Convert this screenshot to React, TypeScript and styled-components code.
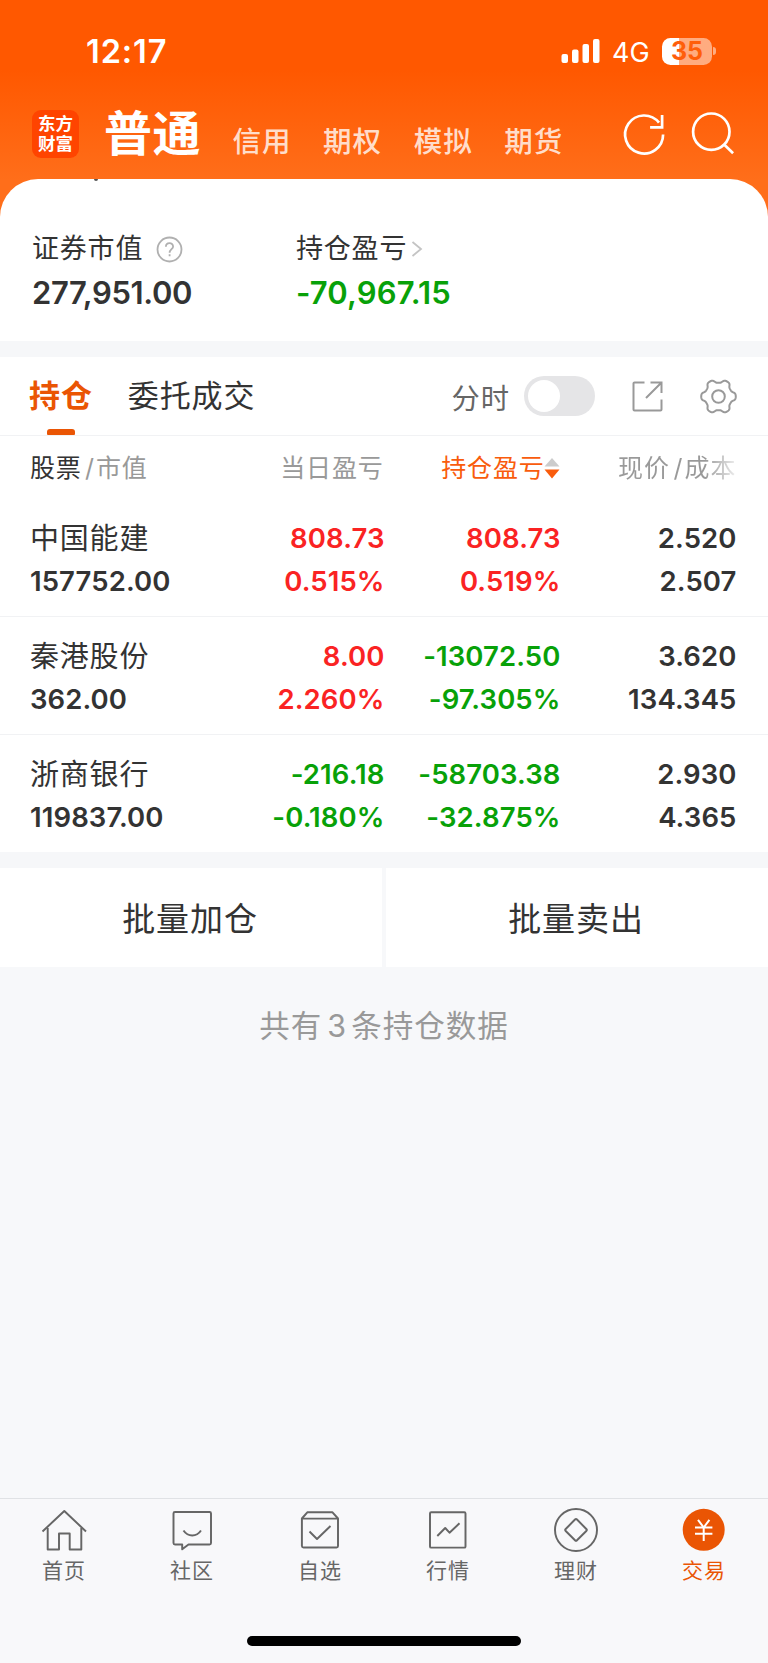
import React from "react";
import styled, { createGlobalStyle } from "styled-components";

const GlobalStyle = createGlobalStyle`
  * { box-sizing: border-box; }
  body {
    margin: 0;
    background: #f7f8fa;
    color: #333;
    font-family: Inter, "Noto Sans CJK SC", sans-serif;
    -webkit-font-smoothing: antialiased;
  }
`;

const Screen = styled.div`
  width: 768px;
  height: 1663px;
  display: flex;
  flex-direction: column;
  overflow: hidden;
  white-space: nowrap;
`;

const Hero = styled.header`
  background: linear-gradient(#ff5800 0, #ff5800 70px, #ff6e1a 180px);
`;

const StatusBar = styled.div`
  height: 102px;
  padding: 0 52px 0 86px;
  display: flex;
  justify-content: space-between;
  align-items: center;
  color: #fff;
`;

const Clock = styled.span`
  margin-top: 1px;
  font-size: 32.5px;
  line-height: 40px;
  font-weight: 600;
  letter-spacing: 0.9px;
`;

const StatusRight = styled.div`
  display: flex;
  align-items: center;
`;

const Network = styled.span`
  margin: 3px 13px 0 11px;
  width: 37px;
  font-size: 27px;
  line-height: 32px;
`;

const Battery = styled.div`
  width: 50px;
  height: 27px;
  border-radius: 8.5px;
  background: linear-gradient(90deg, #fff 17px, rgba(255, 255, 255, 0.5) 17px);
  color: #ff5e0a;
  font-size: 25px;
  font-weight: 700;
  line-height: 27px;
  text-align: center;
`;

const BatteryTip = styled.div`
  width: 3px;
  height: 8px;
  margin-left: 1px;
  border-radius: 0 4px 4px 0;
  background: rgba(255, 255, 255, 0.5);
`;

const TopNav = styled.div`
  height: 77px;
  padding-left: 32px;
  display: flex;
  align-items: flex-start;
  color: #fff;
`;

const Logo = styled.div`
  width: 47px;
  height: 48px;
  margin-top: 8px;
  padding-top: 4px;
  border-radius: 9px;
  background: #ff4400;
  font-size: 17.5px;
  line-height: 20px;
  font-weight: 700;
  text-align: center;
`;

const Account = styled.div`
  margin: 2px 0 0 25px;
  width: 106px;
  font-size: 48px;
  line-height: 60px;
  font-weight: 700;
  letter-spacing: 0.5px;
`;

const AccountLinks = styled.div`
  flex: 1;
  display: flex;
  margin-top: 20px;
`;

const AccountLink = styled.span`
  width: 90.6px;
  padding-left: 22.5px;
  font-size: 28.5px;
  line-height: 40px;
  font-weight: 500;
  letter-spacing: 1px;
  color: rgba(255, 255, 255, 0.8);
`;

const TopIcons = styled.svg`
  width: 120px;
  height: 48px;
  margin: 8px 28px 0 0;
`;

const Summary = styled.section`
  height: 162px;
  padding: 0 32px;
  display: flex;
  flex-wrap: wrap;
  align-content: flex-start;
  background: #fff;
  border-radius: 38px 38px 0 0;
`;

const Remnant = styled.div`
  width: 100%;
  height: 2px;
  &::before {
    content: "";
    display: block;
    width: 4px;
    height: 2px;
    margin-left: 62px;
    border-radius: 0 0 2px 2px;
    background: #555;
  }
`;

const Metric = styled.div`
  width: 264px;
  padding-top: 47px;
`;

const MetricLabel = styled.div`
  display: flex;
  align-items: center;
  height: 42px;
  font-size: 27px;
  line-height: 42px;
  letter-spacing: 0.8px;
`;

const MetricValue = styled.div<{ $loss?: boolean }>`
  color: ${(p) => (p.$loss ? "#08a108" : "#333")};
  letter-spacing: ${(p) => (p.$loss ? "0.15px" : "-0.35px")};
  font-size: 31px;
  line-height: 46px;
  font-weight: 600;
`;

const Gap = styled.div<{ $h: number }>`
  height: ${(p) => p.$h}px;
  background: #f6f7f9;
`;

const Tabs = styled.nav`
  height: 79px;
  padding: 0 31px 0 29px;
  display: flex;
  align-items: center;
  background: #fff;
  border-bottom: 1px solid #f1f2f4;
`;

const Tab = styled.div<{ $active?: boolean }>`
  height: 78px;
  margin-right: 35px;
  display: flex;
  flex-direction: column;
  align-items: center;
  font-size: 31px;
  line-height: 78px;
  letter-spacing: 0.9px;
  font-weight: ${(p) => (p.$active ? 700 : 400)};
  color: ${(p) => (p.$active ? "#ea5504" : "#333")};
  &::after {
    content: "";
    display: ${(p) => (p.$active ? "block" : "none")};
    width: 28px;
    height: 6px;
    flex: none;
    margin: -6px 0 0 0;
    border-radius: 3px 3px 1px 1px;
    background: #ea5504;
  }
`;

const ToggleLabel = styled.span`
  margin-left: auto;
  font-size: 28.3px;
  letter-spacing: 1px;
  color: #666;
`;

const Toggle = styled.span`
  width: 71px;
  height: 40px;
  margin: 0 37.5px 0 13.5px;
  padding: 4px;
  border-radius: 20px;
  background: #e5e5e7;
  &::before {
    content: "";
    display: block;
    width: 32px;
    height: 32px;
    border-radius: 50%;
    background: #fff;
  }
`;

const TableHead = styled.div`
  height: 63px;
  padding-left: 30px;
  display: grid;
  grid-template-columns: 218px 135.5px 177px 176px;
  align-items: center;
  background: #fff;
  color: #999;
  font-size: 25px;
  line-height: 36px;
  letter-spacing: 0.8px;
`;

const HeadCell = styled.div<{ $right?: boolean; $color?: string }>`
  display: flex;
  align-items: center;
  justify-content: ${(p) => (p.$right ? "flex-end" : "flex-start")};
  color: ${(p) => p.$color ?? "inherit"};
`;

const Slash = styled.span`
  margin: 0 1px 0 3.5px;
`;

const Dark = styled.span`
  color: #333;
`;

const FadingCell = styled(HeadCell)`
  color: transparent;
  background: linear-gradient(90deg, #999 144px, rgba(153, 153, 153, 0.15) 176px);
  background-clip: text;
  -webkit-background-clip: text;
  letter-spacing: 1px;
`;

const Row = styled.div`
  height: 118px;
  padding: 17.5px 0 0 30px;
  display: grid;
  grid-template-columns: 218px 136.5px 176px 176px;
  background: #fff;
  border-bottom: 1px solid #f1f2f4;
  &:last-child {
    height: 117px;
    border-bottom: 0;
  }
`;

const Cell = styled.div<{ $tone?: "up" | "down" }>`
  text-align: right;
  font-size: 27.5px;
  line-height: 43px;
  font-weight: 600;
  letter-spacing: 0.1px;
  color: ${(p) => (p.$tone === "up" ? "#fa2323" : p.$tone === "down" ? "#08a108" : "#333")};
`;

const StockCell = styled(Cell)`
  text-align: left;
`;

const StockName = styled.div`
  font-size: 29px;
  font-weight: 400;
  letter-spacing: 0.8px;
`;

const Actions = styled.div`
  display: flex;
  gap: 4px;
`;

const Action = styled.button`
  flex: 1;
  height: 99px;
  padding: 3px 2px 0 0;
  border: 0;
  background: #fff;
  color: #333;
  font: 400 33px/96px Inter, "Noto Sans CJK SC", sans-serif;
  letter-spacing: 0.9px;
`;

const Note = styled.div`
  height: 118px;
  text-align: center;
  font-size: 30.5px;
  line-height: 117px;
  letter-spacing: 1px;
  color: #999;
`;

const Count = styled.span`
  margin: 0 4px 0 5px;
`;

const BottomNav = styled.nav`
  height: 165px;
  margin-top: auto;
  display: grid;
  grid-template-columns: repeat(6, 1fr);
  grid-template-rows: 137px 10px;
  border-top: 1px solid #e0e2e5;
  background: #f8f8fa;
`;

const NavItem = styled.div<{ $active?: boolean }>`
  padding-top: 7px;
  display: flex;
  flex-direction: column;
  align-items: center;
  font-size: 21px;
  line-height: 34px;
  letter-spacing: 0.9px;
  color: ${(p) => (p.$active ? "#ea5504" : "#666")};
`;

const NavIcon = styled.svg`
  width: 48px;
  height: 48px;
  flex: none;
  fill: none;
  stroke: #666;
  stroke-width: 1.95;
  stroke-linejoin: round;
`;

const HomeIndicator = styled.div`
  grid-column: 1 / -1;
  justify-self: center;
  width: 274px;
  height: 10px;
  border-radius: 5px;
  background: #000;
`;

const HelpIcon = styled.svg`
  margin-left: 12.5px;
`;

const Chevron = styled.svg`
  margin-left: 4px;
`;

const ShareIcon = styled.svg`
  margin-right: 37px;
`;

const SortIcon = styled.svg`
  margin-left: -0.5px;
`;

// Six-lobed gear outline with flattened lobes.
const gearPoints = Array.from({ length: 180 }, (_, i) => {
  const a = (i / 180) * Math.PI * 2;
  const r = 15.5 + 1.9 * Math.tanh(1.7 * Math.cos(6 * a));
  return `${(18.5 + r * Math.cos(a)).toFixed(2)},${(18.5 + r * Math.sin(a)).toFixed(2)}`;
}).join(" ");

type Pair = [string, string];
type Holding = { name: string; value: string; day: Pair; total: Pair; price: Pair };

const holdings: Holding[] = [
  { name: "中国能建", value: "157752.00", day: ["808.73", "0.515%"], total: ["808.73", "0.519%"], price: ["2.520", "2.507"] },
  { name: "秦港股份", value: "362.00", day: ["8.00", "2.260%"], total: ["-13072.50", "-97.305%"], price: ["3.620", "134.345"] },
  { name: "浙商银行", value: "119837.00", day: ["-216.18", "-0.180%"], total: ["-58703.38", "-32.875%"], price: ["2.930", "4.365"] },
];

const navItems = [
  {
    label: "首页",
    icon: <><path d="M2.5 25.5 24.3 5 46 25.5" /><path d="M7.7 22v21.5H19V27.5h10.7v16h11.6V22" /></>,
  },
  {
    label: "社区",
    icon: <><path d="M7 6h34.5a1.5 1.5 0 0 1 1.5 1.5V37a1.5 1.5 0 0 1-1.5 1.5h-21l-6.3 4.8v-4.8H7A1.5 1.5 0 0 1 5.5 37V7.5A1.5 1.5 0 0 1 7 6Z" /><path d="M15.5 24.5c4.5 6.7 13 6.7 17.5 0" /></>,
  },
  {
    label: "自选",
    icon: <><path d="M5.9 12.5 11.3 6.3h25.2l5.5 6.2V40a1.5 1.5 0 0 1-1.5 1.5h-33A1.6 1.6 0 0 1 5.9 40ZM5.9 12.6H42" /><path d="M13.5 25.5 21 33l13.5-13" /></>,
  },
  {
    label: "行情",
    icon: <><rect x="6" y="6.3" width="35.5" height="35.3" rx="1.2" /><path d="m13.3 30 7.9-8 4.3 4.7 10-9.4" /></>,
  },
  {
    label: "理财",
    icon: <><circle cx="24" cy="24" r="21" /><path d="M23 13.5q1-1 2 0L34.3 23q1 1 0 2L25 34.3q-1 1-2 0L13.7 25q-1-1 0-2Z" /></>,
  },
  {
    label: "交易",
    active: true,
    icon: <><circle cx="23.7" cy="23.8" r="21" fill="#ea5504" stroke="none" /><path stroke="#fff" strokeWidth="2" d="m18 13.8 5.7 7.7 5.7-7.7M15 21.5h17.4M15 27.7h17.4M23.7 21.5v13.5" /></>,
  },
];

const Figures = ({ pair, colored }: { pair: Pair; colored?: boolean }) => (
  <Cell $tone={colored ? (pair[0].startsWith("-") ? "down" : "up") : undefined}>
    <div>{pair[0]}</div>
    <div>{pair[1]}</div>
  </Cell>
);

export default function App() {
  return (
    <Screen>
      <GlobalStyle />
      <Hero>
        <StatusBar>
          <Clock>12:17</Clock>
          <StatusRight>
            <svg width="40" height="26" fill="#fff">
              <rect x="0.5" y="16" width="6.5" height="9" rx="2" />
              <rect x="11" y="11.5" width="6.5" height="13.5" rx="2" />
              <rect x="21.5" y="6" width="6.5" height="19" rx="2" />
              <rect x="32" y="1" width="6.5" height="24" rx="2" />
            </svg>
            <Network>4G</Network>
            <Battery>35</Battery>
            <BatteryTip />
          </StatusRight>
        </StatusBar>
        <TopNav>
          <Logo>东方<br />财富</Logo>
          <Account>普通</Account>
          <AccountLinks>
            {["信用", "期权", "模拟", "期货"].map((t) => <AccountLink key={t}>{t}</AccountLink>)}
          </AccountLinks>
          <TopIcons viewBox="0 0 120 48" fill="none" stroke="#fff" strokeWidth="2.7">
            <path d="M43.1 24.5a19 19 0 1 1-4.1-11.8" />
            <path d="M42.1 5v12.300H30.1" />
            <circle cx="91.3" cy="21.7" r="18.2" />
            <path d="m104.1 34.5 9 8.7" />
          </TopIcons>
        </TopNav>
        <Summary>
          <Remnant />
          <Metric>
            <MetricLabel>
              证券市值
              <HelpIcon width="27" height="27" viewBox="0 0 27 27" fill="none" stroke="#b0b0b0" strokeWidth="1.8">
                <circle cx="13.5" cy="13.5" r="12" />
                <path d="M9.9 10.8c0-4.8 7.2-4.8 7.2-.3 0 2.6-3.5 2.9-3.5 6.3M13.6 18.3v2" />
              </HelpIcon>
            </MetricLabel>
            <MetricValue>277,951.00</MetricValue>
          </Metric>
          <Metric>
            <MetricLabel>
              持仓盈亏
              <Chevron width="12" height="18" fill="none" stroke="#c4c4c4" strokeWidth="1.8">
                <path d="m1.5 2 8.5 7-8.5 7" />
              </Chevron>
            </MetricLabel>
            <MetricValue $loss>-70,967.15</MetricValue>
          </Metric>
        </Summary>
      </Hero>
      <Gap $h={16} />
      <Tabs>
        <Tab $active>持仓</Tab>
        <Tab>委托成交</Tab>
        <ToggleLabel>分时</ToggleLabel>
        <Toggle />
        <ShareIcon width="31" height="31" fill="none" stroke="#999" strokeWidth="2">
          <path d="M12.5 1.5H2.5a1 1 0 0 0-1 1v26a1 1 0 0 0 1 1h26a1 1 0 0 0 1-1V18.5M18.5 1.5h11V12M29.5 1.5 14 17" />
        </ShareIcon>
        <svg width="37" height="37" fill="none" stroke="#999" strokeWidth="2">
          <polygon points={gearPoints} />
          <circle cx="18.5" cy="18.5" r="6.3" />
        </svg>
      </Tabs>
      <TableHead>
        <HeadCell><Dark>股票</Dark><Slash>/</Slash>市值</HeadCell>
        <HeadCell $right>当日盈亏</HeadCell>
        <HeadCell $right $color="#f95c0c">
          持仓盈亏
          <SortIcon width="16.5" height="22">
            <path d="M8 1 15.5 9.5H.5Z" fill="#ccc" />
            <path d="M.5 12.5h15L8 21.5Z" fill="#f95c0c" />
          </SortIcon>
        </HeadCell>
        <FadingCell $right>现价<Slash>/</Slash>成本</FadingCell>
      </TableHead>
      <div>
        {holdings.map((h) => (
          <Row key={h.name}>
            <StockCell><StockName>{h.name}</StockName><div>{h.value}</div></StockCell>
            <Figures pair={h.day} colored />
            <Figures pair={h.total} colored />
            <Figures pair={h.price} />
          </Row>
        ))}
      </div>
      <Gap $h={16} />
      <Actions>
        <Action>批量加仓</Action>
        <Action>批量卖出</Action>
      </Actions>
      <Note>共有<Count>3</Count>条持仓数据</Note>
      <BottomNav>
        {navItems.map((n) => (
          <NavItem key={n.label} $active={n.active}>
            <NavIcon viewBox="0 0 48 48">{n.icon}</NavIcon>
            {n.label}
          </NavItem>
        ))}
        <HomeIndicator />
      </BottomNav>
    </Screen>
  );
}
